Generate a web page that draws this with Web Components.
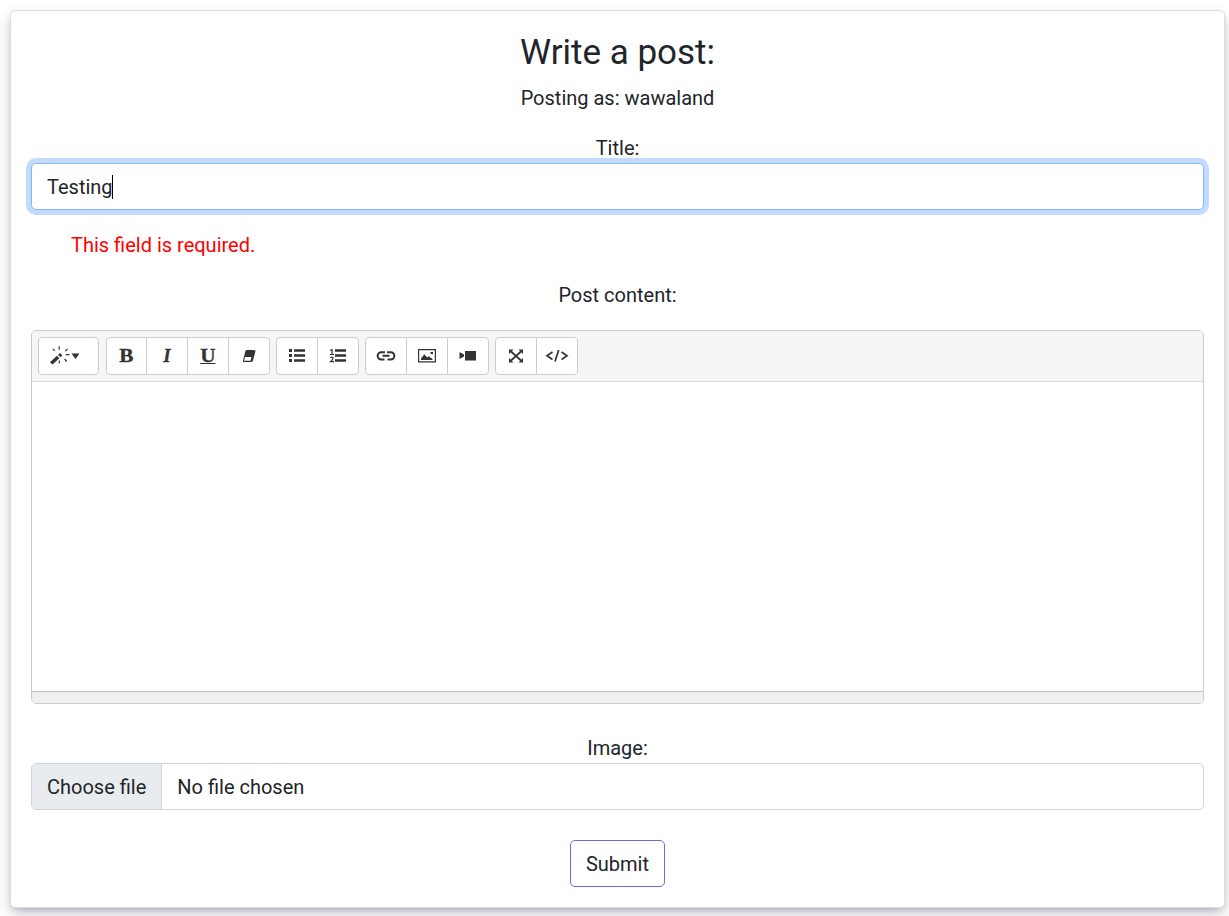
<!DOCTYPE html>
<html lang="en">
<head>
<meta charset="utf-8">
<title>Write a post</title>
<style>
html,body{margin:0;background:#fff;height:916px;overflow:hidden}
body{font:400 20px/30px Roboto,"Liberation Sans",sans-serif;color:#212529;box-sizing:border-box;padding:10px 4px 0 10px}
</style>
</head>
<body>
<post-card>
  <span slot="heading">Write a post:</span>
  <span slot="author">Posting as: wawaland</span>
  <form-field label="Title:"><text-input value="Testing"></text-input></form-field>
  <field-error>This field is required.</field-error>
  <form-field label="Post content:" class="content"><rich-editor></rich-editor></form-field>
  <form-field label="Image:" class="image"><file-input></file-input></form-field>
  <submit-button>Submit</submit-button>
</post-card>
<script>
const define = (name, html) => customElements.define(name, class extends HTMLElement {
  constructor() {
    super();
    this.attachShadow({ mode: 'open' }).innerHTML = html;
  }
  connectedCallback() {
    this.shadowRoot.querySelectorAll('[data-attr]').forEach(n => {
      n.textContent = this.getAttribute(n.dataset.attr) || '';
    });
  }
});

define('post-card', `<style>
:host{display:flex;flex-direction:column;box-sizing:border-box;height:898px;padding:20px;border:1px solid #dcdcde;border-radius:5px;background:#fff;box-shadow:0 7px 16px -1px rgba(50,50,93,.23),0 4px 9px -4px rgba(0,0,0,.3)}
h2{font-weight:400;font-size:35px;line-height:42px;margin:0;padding:1px 0 9px;text-align:center}
p{margin:0 0 20px;text-align:center}
</style><h2><slot name="heading"></slot></h2><p><slot name="author"></slot></p><slot></slot>`);

define('form-field', `<style>
:host{display:block}
label{display:block;text-align:center}
:host(.content) label{margin-bottom:20px}
:host(.image){margin-top:29px}
</style><label data-attr="label"></label><slot></slot>`);

define('text-input', `<style>
:host{display:flex;align-items:center;box-sizing:border-box;height:47px;padding:0 15px;border:1px solid #86b7fe;border-radius:5px;background:#fff;box-shadow:0 0 0 5px #c2dbfe}
i{width:1px;height:24px;margin-left:-1px;background:#000}
</style><span data-attr="value"></span><i></i>`);

define('field-error', `<style>
:host{display:block;padding-left:40px;margin:20px 0;color:#f00}
</style><slot></slot>`);

define('file-input', `<style>
:host{display:flex;box-sizing:border-box;height:47px;line-height:47px;border:1px solid #ced4da;border-radius:5px;overflow:hidden}
b{font-weight:400;background:#e9ecef;padding:0 15px;border-right:1px solid #ced4da}
span{padding-left:15px}
</style><b>Choose file</b><span>No file chosen</span>`);

define('submit-button', `<style>
:host{display:block;align-self:center;box-sizing:border-box;height:47px;line-height:47px;margin-top:30px;padding:0 15px;border:1px solid #7a66da;border-radius:5px}
</style><slot></slot>`);

define('tool-group', `<style>
:host{display:flex;box-sizing:border-box;height:38px;border:1px solid #ccc;border-radius:4px;background:#fff;overflow:hidden}
:host(:first-child){margin-right:1px}
</style><slot></slot>`);

define('tool-button', `<style>
:host{display:flex;align-items:center;justify-content:center;width:40px;color:#333}
:host(:not(:first-child)){border-left:1px solid #ccc}
:host(.narrow){width:39px}
:host(.wide){width:59px}
::slotted(svg){display:block;fill:currentColor}
</style><slot></slot>`);

define('rich-editor', `<style>
:host{display:flex;flex-direction:column;box-sizing:border-box;height:374px;border:1px solid #ccc;border-radius:5px;overflow:hidden;background:#fff}
header{display:flex;gap:6px;box-sizing:border-box;height:51px;padding:6px;background:#f5f5f5;border-bottom:1px solid #d9d9d9}
main{flex:1}
footer{height:11px;background:#f0f0f0;border-top:1px solid #bbb}
.s{font:bold 19px/20px "Liberation Serif",serif;transform:scaleX(1.12);-webkit-text-stroke:.3px #333}
.s.i{transform:none}
.u{text-decoration:underline;text-decoration-thickness:1px;text-underline-offset:1px}
</style>
<header>
<tool-group><tool-button class="wide"><svg width="37" height="20" viewBox="0 0 37 20"><path d="M0 16.200 7 9.800l2.300 2.400L2.500 18.600zM8 8.700l2-1.800 2.400 2.500-2 1.900z"/><path d="M9.200.3v3.500M2.800 2.800l2 2M17.500 2.800l-2.300 2.300M15.800 8.700h3.700M14.500 13l2.300 2.500M9.300 14.500v3" stroke="#333" stroke-width="1.200" fill="none"/><path d="M21.500 7.500h8l-4 5.500z"/></svg></tool-button></tool-group>
<tool-group>
<tool-button class="narrow"><span class="s">B</span></tool-button><tool-button><span class="s i" style="font-style:italic">I</span></tool-button><tool-button><span class="s u">U</span></tool-button>
<tool-button><svg width="14" height="14" viewBox="0 0 14 14"><path fill-rule="evenodd" d="M5 1h7q1.800 0 1.400 1.500L11 11.500Q10.500 13 9 13H2Q.5 13 1 11.500L3.300 2.200Q3.700 1 5 1zM3 8 2 11.700h6.500L9.500 8z"/></svg></tool-button>
</tool-group>
<tool-group>
<tool-button><svg width="18" height="14" viewBox="0 0 18 14"><path d="M1 0h3v3H1zM1 5h3v3H1zM1 10h3v3H1zM6 .2h11v2.600H6zM6 5.200h11v2.600H6zM6 10.200h11v2.600H6z"/></svg></tool-button>
<tool-button><svg width="18" height="14" viewBox="0 0 18 14"><path d="M6 .2h11v2.600H6zM6 5.200h11v2.600H6zM6 10.200h11v2.600H6z"/><path d="M1.200 1.500 3 .5V5M1 5.500h4M1.200 8.800q2.800-1.500 2.800.7Q4 10.500 1.500 12.700H5" fill="none" stroke="#333" stroke-width="1.200"/></svg></tool-button>
</tool-group>
<tool-group>
<tool-button><svg width="20" height="12" viewBox="0 0 20 12"><path d="M9 2.200H5.300a3.500 3.500 0 0 0 0 7.300H8.500M11 2.200h3.700a3.500 3.500 0 0 1 0 7.300H11.500M6.500 5.850h7" fill="none" stroke="#333" stroke-width="2"/></svg></tool-button>
<tool-button><svg width="18" height="14" viewBox="0 0 18 14"><path d="M.6.600h16.800v12.300H.6z" fill="none" stroke="#333" stroke-width="1.200"/><path d="M3 11V9.500l3.300-4.300 2.900 3.300 1.500-1.300L14.500 10v1zM12.500 3H15v2h-2.500z"/></svg></tool-button>
<tool-button><svg width="18" height="12" viewBox="0 0 18 12"><path d="M.5 2l4.500 2.500v2L.5 9zM6 1h11v9.500H6z"/></svg></tool-button>
</tool-group>
<tool-group>
<tool-button><svg width="14" height="14" viewBox="0 0 14 14"><path d="M0 .5h4.500L0 5zM14 .5V5L9.500.5zM0 13.500V9l4.500 4.500zM14 13.500H9.500L14 9z"/><path d="M2 2.500l10 9M12 2.500l-10 9" stroke="#333" stroke-width="1.700"/></svg></tool-button>
<tool-button><svg width="24" height="12" viewBox="0 0 24 12"><path d="M7.500 2 2 5.800l5.500 3.700M16.500 2 22 5.800l-5.500 3.700M13.700 0 10 11.500" fill="none" stroke="#333" stroke-width="1.700"/></svg></tool-button>
</tool-group>
</header><main></main><footer></footer>`);
</script>
</body>
</html>
